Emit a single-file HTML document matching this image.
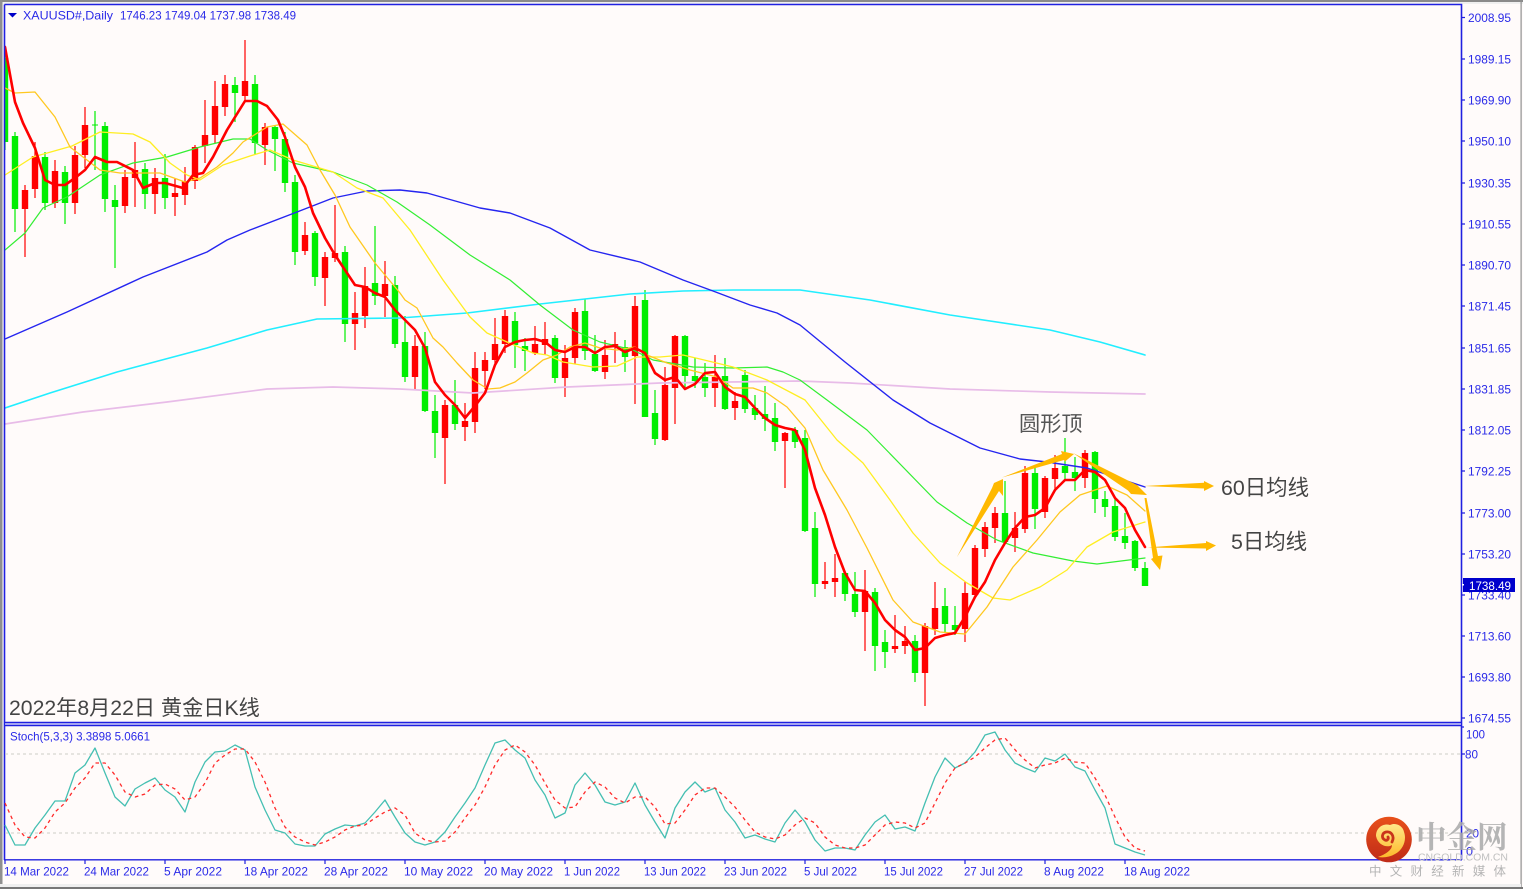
<!DOCTYPE html>
<html lang="zh">
<head>
<meta charset="utf-8">
<title>XAUUSD Daily</title>
<style>
html,body{margin:0;padding:0;background:#fffbfa;width:1523px;height:889px;overflow:hidden}
svg{display:block;font-family:"Liberation Sans","Noto Sans CJK SC",sans-serif;filter:blur(.3px)}
.ax text{fill:#2a2ae8;font-size:12px}
</style>
</head>
<body>
<svg width="1523" height="889" viewBox="0 0 1523 889" xmlns="http://www.w3.org/2000/svg">
<defs>
<clipPath id="c"><rect x="5" y="6" width="1456" height="716"/></clipPath>
<linearGradient id="lg" x1="0" y1="0" x2="0" y2="1"><stop offset="0" stop-color="#e8501a"/><stop offset="1" stop-color="#bf2a18"/></linearGradient>
<linearGradient id="ly" x1="0" y1="0" x2="0" y2="1"><stop offset="0" stop-color="#ffe88a"/><stop offset="1" stop-color="#fdb92c"/></linearGradient>
</defs>
<rect width="1523" height="889" fill="#fffbfa"/>

<!-- window edges -->
<rect x="0" y="0" width="1523" height="2" fill="#8a8a8a"/>
<rect x="0" y="2" width="1523" height="2" fill="#f0f0f0"/>
<rect x="0" y="0" width="2.5" height="889" fill="#8f8f8f"/>
<rect x="1520.5" y="0" width="1.2" height="889" fill="#909090"/>
<rect x="0" y="884" width="1521" height="3" fill="#efefef"/>
<rect x="0" y="887" width="1523" height="2" fill="#777"/>

<g clip-path="url(#c)">
<!-- wicks -->
<path fill="none" stroke="#00ee00" stroke-width="1.2" d="M5 50V150M15 132V232M45 152V210M65 166V224M95 111V170M105 122V212M115 185V268M145 163V209M165 154V209M235 77V122M255 75V155M275 125V171M285 132V192M295 175V265M315 231V286M345 246V342M375 226V305M395 276V348M405 316V382M425 332V412M435 395V458M455 380V430M515 312V368M525 338V371M555 335V383M585 299V360M595 335V372M625 340V372M645 290V417M655 390V445M685 335V388M695 358V388M705 363V397M725 358V410M745 370V413M755 395V420M765 386V431M775 403V451M795 427V448M805 430V532M815 512V597M845 572V601M855 572V617M875 588V671M885 630V668M915 635V682M945 588V633M955 606V635M1005 481V543M1035 468V529M1065 438V480M1075 457V491M1095 451V513M1105 491V517M1115 498V541M1125 513V549M1135 540V571M1145 562V586"/>
<path fill="none" stroke="#ff0000" stroke-width="1.2" d="M25 185V257M35 142V198M55 160V208M75 146V214M85 107V168M125 170V213M135 142V207M155 168V214M175 178V216M185 167V205M195 145V189M205 100V163M215 81V143M225 75V116M245 40V102M265 123V165M305 222V255M325 252V306M335 205V262M355 292V350M365 267V328M385 261V317M415 335V390M445 400V484M465 403V441M475 352V433M485 352V389M495 318V365M505 310V353M535 326V355M545 322V355M565 345V397M575 308V364M605 340V379M615 332V363M635 296V404M665 367V441M675 335V424M715 355V407M735 392V420M785 432V488M825 562V589M835 554V597M865 570V651M895 615V653M905 626V654M925 623V706M935 582V635M965 582V642M975 545V597M985 522V557M995 507V543M1015 512V552M1025 466V533M1045 476V518M1055 455V491M1085 450V488"/>
<!-- bodies -->
<path fill="none" stroke="#00ee00" stroke-width="6.4" d="M5 58V142M15 136V209M45 157V203M65 172V203M105 126V199M115 200V207M145 169V194M165 178V198M235 85V93M255 84V143M275 127V139M285 139V183M295 182V252M315 233V277M345 252V324M375 283V296M395 285V344M405 342V377M425 346V411M435 411V433M455 405V424M515 321V345M525 346V351M555 338V378M585 311V351M595 354V371M625 347V357M645 300V417M655 413V439M685 336V376M695 376V381M705 377V388M725 376V409M745 375V409M755 408V415M765 414V419M775 418V442M795 430V442M805 438V531M815 528V584M845 573V594M855 594V612M875 592V646M885 642V652M915 641V673M945 606V624M955 625V630M1005 513V542M1035 473V509M1065 466V473M1075 472V478M1095 452V499M1105 499V507M1115 506V537M1125 536V543M1135 541V568M1145 568V586"/>
<path fill="none" stroke="#00ee00" stroke-width="1" d="M92 125H98"/>
<path fill="none" stroke="#ff0000" stroke-width="6.4" d="M25 190V209M35 156V189M55 171V203M75 155V203M85 125V155M125 177V206M135 170V178M155 178V194M175 193V197M185 181V195M195 147V181M205 135V146M215 106V135M225 84V107M245 81V96M265 127V145M305 235V251M325 257V278M335 253V258M355 313V324M365 286V316M385 284V296M415 346V377M445 405V438M465 421V427M475 368V422M485 360V371M495 344V360M505 316V344M535 344V353M545 339V345M565 358V378M575 312V358M605 355V372M615 344V347M635 306V356M665 385V440M675 336V388M715 377V388M735 401V408M785 433V441M825 581V584M835 578V582M865 591V612M895 646V649M905 641V646M925 626V673M935 608V629M965 593V629M975 548V595M985 527V549M995 513V528M1015 528V538M1025 473V529M1045 478V512M1055 468V479M1085 453V478"/>

<!-- moving averages -->
<g fill="none" stroke-linejoin="round" stroke-linecap="round">
<polyline stroke="#e8bce8" stroke-width="1.7" points="5,424 83,412 167,402 267,389 333,387 400,389 473,393 567,387 660,383 800,381 850,383 950,389 1050,392 1145,394"/>
<polyline stroke="#22eeff" stroke-width="1.6" points="5,408 50,393 117,372 207,348 267,330 317,319 400,318 467,313 540,304 630,294 683,291 733,290 800,290 870,300 950,315 1050,330 1100,342 1145,355"/>
<polyline stroke="#2525f0" stroke-width="1.4" points="5,339 67,312 143,277 207,252 227,240 250,230 297,212 333,198 367,191 400,190 427,193 480,208 510,213 550,228 590,250 640,262 683,280 713,291 750,305 777,313 800,325 845,362 893,400 930,423 980,448 1020,459 1047,462 1087,468 1145,487"/>
<polyline stroke="#33ee33" stroke-width="1.2" points="5,250 25,233 43,208 67,197 100,175 133,163 167,157 200,147 233,139 250,139 267,150 293,163 333,172 367,185 397,202 430,225 470,255 510,280 540,305 573,330 600,342 633,350 653,360 693,367 733,368 767,367 783,372 800,380 827,400 867,430 937,502 967,523 997,540 1033,553 1073,561 1097,564 1145,558"/>
<polyline stroke="#ffee22" stroke-width="1.3" points="5,175 33,157 72,146 100,132 133,134 150,142 170,163 187,175 200,180 223,165 250,156 270,150 293,160 333,172 357,188 383,198 410,230 443,280 470,317 487,333 507,342 533,353 547,355 563,362 593,367 617,366 637,357 660,357 683,355 700,359 733,367 767,380 805,400 837,440 863,463 890,500 913,533 940,563 967,583 993,598 1010,600 1040,587 1067,570 1087,547 1113,532 1145,522"/>
<polyline stroke="#ffc820" stroke-width="1.3" points="5,88 15,93 35,92 55,117 70,147 100,170 120,173 160,173 185,182 200,178 217,167 233,153 243,142 267,127 283,124 307,145 320,170 335,195 350,227 375,263 400,293 405,300 417,308 433,338 443,347 457,363 473,380 488,389 500,388 515,382 527,373 543,360 557,355 570,347 585,343 600,348 617,350 635,347 647,355 667,363 690,370 717,377 733,388 753,388 767,393 787,407 805,428 823,470 847,510 867,548 893,600 913,622 940,632 965,634 987,607 1013,567 1037,540 1060,512 1080,495 1107,486 1127,495 1145,511"/>
<polyline stroke="#ff0000" stroke-width="2.6" points="5,47 15,102 23,123 35,148 45,180 55,185 65,185 75,178 85,170 95,157 107,162 117,162 133,170 143,188 155,183 165,183 183,188 193,175 203,173 213,157 227,130 245,101 257,101 267,106 278,120 285,137 295,167 305,187 313,213 325,238 335,255 345,270 355,285 365,287 375,293 385,297 395,310 415,330 425,348 435,382 445,395 455,405 465,418 475,406 485,393 495,365 505,347 515,342 525,340 535,339 545,342 555,350 565,352 575,347 585,347 595,353 605,347 615,346 625,352 635,348 645,353 655,373 665,380 675,377 685,389 695,384 705,373 715,372 725,387 735,394 745,397 755,408 765,418 775,425 785,428 795,430 805,450 815,488 825,515 835,547 845,573 855,590 865,591 875,603 885,620 895,630 905,637 915,650 925,648 935,638 945,635 955,633 965,617 975,597 985,582 995,560 1005,543 1015,528 1025,517 1035,515 1045,508 1055,490 1065,480 1075,480 1085,470 1095,472 1105,480 1115,498 1125,508 1135,530 1145,547"/>
</g>
</g>

<!-- frames -->
<g fill="none" stroke="#2020e0">
<path stroke-width="1.6" d="M4.5 4.5H1461.5V860M4.5 4.5V860"/>
<path stroke-width="1.4" d="M4 722.5H1462M4 725.5H1462M4 859.8H1462"/>
</g>
<rect x="5" y="723.2" width="1456" height="1.6" fill="#a9a9f2"/>

<!-- axis ticks -->
<path fill="none" stroke="#2020e0" stroke-width="1.2" d="M1462 17.5h3M1462 59h3M1462 100h3M1462 141h3M1462 183h3M1462 224h3M1462 265h3M1462 306h3M1462 348h3M1462 389h3M1462 430h3M1462 471h3M1462 513h3M1462 554h3M1462 595h3M1462 636h3M1462 677h3M1462 718h3M1462 727h2M1462 754h3M5 860v4M85 860v4M165 860v4M245 860v4M325 860v4M405 860v4M485 860v4M565 860v4M645 860v4M725 860v4M805 860v4M885 860v4M965 860v4M1045 860v4M1125 860v4"/>

<!-- price labels -->
<g class="ax">
<text x="1468" y="22" textLength="43" lengthAdjust="spacingAndGlyphs">2008.95</text>
<text x="1468" y="63.500" textLength="43" lengthAdjust="spacingAndGlyphs">1989.15</text>
<text x="1468" y="104.500" textLength="43" lengthAdjust="spacingAndGlyphs">1969.90</text>
<text x="1468" y="145.500" textLength="43" lengthAdjust="spacingAndGlyphs">1950.10</text>
<text x="1468" y="187.500" textLength="43" lengthAdjust="spacingAndGlyphs">1930.35</text>
<text x="1468" y="228.500" textLength="43" lengthAdjust="spacingAndGlyphs">1910.55</text>
<text x="1468" y="269.500" textLength="43" lengthAdjust="spacingAndGlyphs">1890.70</text>
<text x="1468" y="310.500" textLength="43" lengthAdjust="spacingAndGlyphs">1871.45</text>
<text x="1468" y="352.500" textLength="43" lengthAdjust="spacingAndGlyphs">1851.65</text>
<text x="1468" y="393.500" textLength="43" lengthAdjust="spacingAndGlyphs">1831.85</text>
<text x="1468" y="434.500" textLength="43" lengthAdjust="spacingAndGlyphs">1812.05</text>
<text x="1468" y="475.500" textLength="43" lengthAdjust="spacingAndGlyphs">1792.25</text>
<text x="1468" y="517.500" textLength="43" lengthAdjust="spacingAndGlyphs">1773.00</text>
<text x="1468" y="558.500" textLength="43" lengthAdjust="spacingAndGlyphs">1753.20</text>
<text x="1468" y="599.500" textLength="43" lengthAdjust="spacingAndGlyphs">1733.40</text>
<text x="1468" y="640.500" textLength="43" lengthAdjust="spacingAndGlyphs">1713.60</text>
<text x="1468" y="681.500" textLength="43" lengthAdjust="spacingAndGlyphs">1693.80</text>
<text x="1468" y="722.500" textLength="43" lengthAdjust="spacingAndGlyphs">1674.55</text>
<text x="1466" y="738.500" textLength="19" lengthAdjust="spacingAndGlyphs">100</text>
<text x="1465" y="758.500" textLength="13" lengthAdjust="spacingAndGlyphs">80</text>
<text x="1466" y="837.500" textLength="13" lengthAdjust="spacingAndGlyphs">20</text>
<text x="1466" y="855.500" textLength="7" lengthAdjust="spacingAndGlyphs">0</text>

<!-- header -->
<text x="23" y="19.500" textLength="90" lengthAdjust="spacingAndGlyphs">XAUUSD#,Daily</text>
<text x="120" y="19.500" textLength="176" lengthAdjust="spacingAndGlyphs">1746.23 1749.04 1737.98 1738.49</text>
<text x="10" y="740.500" textLength="140" lengthAdjust="spacingAndGlyphs">Stoch(5,3,3) 3.3898 5.0661</text>

<!-- dates -->
<text x="4" y="875.500" textLength="65" lengthAdjust="spacingAndGlyphs">14 Mar 2022</text>
<text x="84" y="875.500" textLength="65" lengthAdjust="spacingAndGlyphs">24 Mar 2022</text>
<text x="164" y="875.500" textLength="58" lengthAdjust="spacingAndGlyphs">5 Apr 2022</text>
<text x="244" y="875.500" textLength="64" lengthAdjust="spacingAndGlyphs">18 Apr 2022</text>
<text x="324" y="875.500" textLength="64" lengthAdjust="spacingAndGlyphs">28 Apr 2022</text>
<text x="404" y="875.500" textLength="69" lengthAdjust="spacingAndGlyphs">10 May 2022</text>
<text x="484" y="875.500" textLength="69" lengthAdjust="spacingAndGlyphs">20 May 2022</text>
<text x="564" y="875.500" textLength="56" lengthAdjust="spacingAndGlyphs">1 Jun 2022</text>
<text x="644" y="875.500" textLength="62" lengthAdjust="spacingAndGlyphs">13 Jun 2022</text>
<text x="724" y="875.500" textLength="63" lengthAdjust="spacingAndGlyphs">23 Jun 2022</text>
<text x="804" y="875.500" textLength="53" lengthAdjust="spacingAndGlyphs">5 Jul 2022</text>
<text x="884" y="875.500" textLength="59" lengthAdjust="spacingAndGlyphs">15 Jul 2022</text>
<text x="964" y="875.500" textLength="59" lengthAdjust="spacingAndGlyphs">27 Jul 2022</text>
<text x="1044" y="875.500" textLength="60" lengthAdjust="spacingAndGlyphs">8 Aug 2022</text>
<text x="1124" y="875.500" textLength="66" lengthAdjust="spacingAndGlyphs">18 Aug 2022</text>
</g>
<path d="M8 13h9l-4.500 4.500z" fill="#0000c8"/>

<!-- current price tag -->
<rect x="1463" y="578" width="52" height="14" fill="#0000cc"/>
<rect x="1462" y="584" width="2" height="1.500" fill="#fff"/>
<text x="1469" y="590" font-size="12" fill="#fff" textLength="42" lengthAdjust="spacingAndGlyphs">1738.49</text>

<!-- stochastic -->
<g fill="none">
<path d="M5 754H1461M5 833H1461" stroke="#cdcdc6" stroke-width="1" stroke-dasharray="3 3"/>
<polyline stroke="#45bfb2" stroke-width="1.3" stroke-linejoin="round" points="5,825 15,845 25,845 35,828 45,815 55,801 65,801 75,773 85,765 95,748 105,773 115,797 125,806 135,789 145,783 155,778 165,790 175,797 185,812 195,782 205,762 215,752 225,751 235,745 245,750 255,787 265,810 275,830 285,833 295,844 305,846 315,846 325,834 335,829 345,825 355,826 365,823 375,812 385,800 395,817 405,833 415,842 425,845 435,842 445,832 455,817 465,803 475,788 485,765 495,743 505,740 515,750 525,758 535,780 545,795 555,818 565,813 575,785 585,773 595,785 605,802 615,805 625,802 635,783 645,805 655,822 665,838 675,808 685,792 695,782 705,792 715,788 725,810 735,822 745,838 755,835 765,839 775,842 785,823 795,810 805,822 815,840 825,851 835,848 845,848 855,850 865,835 875,822 885,815 895,829 905,827 915,831 925,803 935,777 945,758 955,768 965,763 975,752 985,735 995,732 1005,750 1015,763 1025,768 1035,772 1045,758 1055,761 1065,754 1075,767 1085,771 1095,790 1105,808 1115,844 1125,848 1135,852 1145,855"/>
<polyline stroke="#ff2a2a" stroke-width="1.3" stroke-dasharray="3.500 3.500" points="5,803 15,825 25,837 35,838 45,828 55,812 65,803 75,788 85,778 95,763 105,763 115,775 125,792 135,797 145,794 155,785 165,784 175,789 185,800 195,797 205,783 215,763 225,755 235,749 245,749 255,762 265,782 275,808 285,827 295,837 305,842 315,845 325,842 335,837 345,830 355,826 365,825 375,818 385,812 395,808 405,815 415,833 425,840 435,842 445,841 455,832 465,818 475,805 485,787 495,765 505,750 515,745 525,752 535,765 545,783 555,800 565,808 575,807 585,792 595,782 605,787 615,798 625,803 635,797 645,797 655,807 665,824 675,823 685,810 695,795 705,788 715,788 725,797 735,807 745,820 755,832 765,837 775,839 785,835 795,825 805,818 815,823 825,837 835,845 845,848 855,848 865,845 875,835 885,825 895,822 905,823 915,828 925,823 935,803 945,783 955,768 965,763 975,757 985,748 995,740 1005,738 1017,752 1025,760 1035,768 1045,765 1055,763 1065,758 1075,762 1085,763 1095,778 1105,795 1115,817 1125,837 1135,848 1145,851"/>
</g>

<!-- arrows -->
<g fill="#ffb900">
<polygon points="957,557 992,488 994,483 1003,479 1003,496 999,491"/>
<polygon points="1002,477.500 1062,454 1061,451 1074,454 1065,461.500 1064,460"/>
<polygon points="1073,453 1134,483.500 1137,485 1147,495 1131,494 1128,490.500"/>
<polygon points="1144.500,498 1146.500,498 1158,556 1162.500,555.500 1160,570 1151,559 1153,558"/>
<polygon points="1144,486 1204,482.700 1204,481 1214,486 1204,491 1204,488.500"/>
<polygon points="1147,547.500 1206,543 1206,541 1216,545.500 1206,551 1206,548.500"/>
</g>

<!-- annotations -->
<g fill="#444" font-size="21.200" font-family="'Liberation Sans','Noto Sans CJK SC',sans-serif">
<text x="9" y="715">2022年8月22日 黄金日K线</text>
<text x="1019" y="431" fill="#555">圆形顶</text>
<text x="1221" y="495" font-size="21.400">60日均线</text>
<text x="1231" y="549" font-size="21.400">5日均线</text>
</g>

<!-- logo -->
<circle cx="1389" cy="839.500" r="22.800" fill="url(#lg)"/>
<path d="M1376 836C1376 827 1384 823 1390 825C1396 822 1403 826 1404 832C1407 840 1403 850 1395 854C1390 857 1384 858 1378 857C1386 854 1392 850 1392 845C1388 848 1378 846 1376 836Z" fill="url(#ly)"/>
<path d="M1392 842C1395 836 1391 831 1386 832C1382 833 1381 838 1385 840C1387 841 1389 839 1388 837" fill="none" stroke="#c9341a" stroke-width="2.800" stroke-linecap="round"/>
<text x="1416" y="848" font-size="30.500" font-weight="700" fill="#a8a8a8" fill-opacity=".85" font-family="'Noto Serif CJK SC','Noto Sans CJK SC',serif">中金网</text>
<text x="1418" y="860.500" font-size="10.500" fill="#c0c0c0" textLength="90" lengthAdjust="spacing">CNGOLD.COM.CN</text>
<text x="1369" y="875.500" font-size="12.500" fill="#b4b4b4" textLength="137" lengthAdjust="spacing">中文财经新媒体</text>
</svg>
</body>
</html>
